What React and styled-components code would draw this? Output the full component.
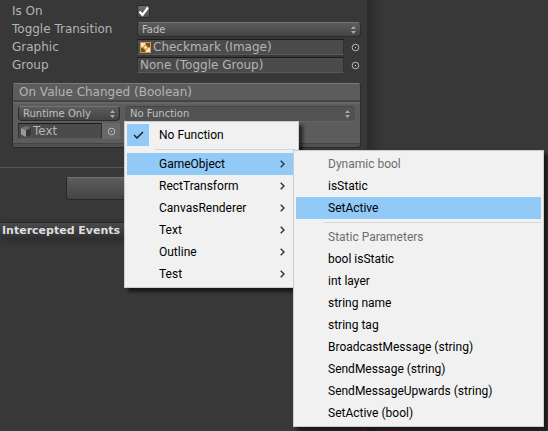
import React from "react";
import styled, { createGlobalStyle, css } from "styled-components";

const GlobalStyle = createGlobalStyle`
  * { box-sizing: border-box; }
  body {
    margin: 0;
    background: #383838;
    color: #b4b4b4;
    font: 12px/16px "DejaVu Sans", Verdana, sans-serif;
  }
  button, select, input { font: inherit; color: inherit; }
`;

const Editor = styled.main`
  display: grid;
  grid-template-columns: 67fr 33fr;
  min-height: 100vh;
  overflow: hidden;
`;

const Inspector = styled.section`
  display: flex;
  flex-direction: column;
  min-width: 0;
`;

const SidePanel = styled.aside`
  background: linear-gradient(to right, #2b2b2b, #323232 8px, #383838 20px);
`;

const Properties = styled.form`
  display: grid;
  gap: 2px;
  padding: 3px 6px 0 12px;
`;

const Row = styled.div`
  display: grid;
  grid-template-columns: 125px 1fr;
  align-items: center;
  height: 16px;
  white-space: nowrap;
`;

const Tick = styled.span`
  display: grid;
  width: 13px;
  height: 13px;

  > * { grid-area: 1 / 1; }
`;

const TickInput = styled.input`
  appearance: none;
  width: 13px;
  height: 13px;
  margin: 0;
  border: 1px solid #2a2a2a;
  border-radius: 2px;
  background: linear-gradient(#6e6e6e, #4c4c4c);
`;

const TickMark = styled.svg`
  pointer-events: none;
`;

const PopupWrap = styled.div`
  position: relative;
  display: grid;
  min-width: 0;
`;

const Popup = styled.select`
  appearance: none;
  width: 100%;
  height: 15px;
  margin: 0;
  padding: 0 14px 0 4px;
  border: 1px solid #2b2b2b;
  border-top-color: #727272;
  border-radius: 4px;
  background: linear-gradient(#5c5c5c, #444);
  color: #c0c0c0;
  font-size: 10px;
  line-height: 13px;

  ${(p) => p.$open && css`
    border-color: #505050;
    border-top-color: #464646;
    background: #525252;
    box-shadow: 0 1px #666;
  `}
`;

const PopupArrows = styled.svg`
  position: absolute;
  right: 5px;
  top: 4px;
  pointer-events: none;
`;

const ObjectRow = styled.div`
  display: grid;
  grid-template-columns: 1fr 17px;
  align-items: center;
  min-width: 0;
`;

const ObjectValue = styled.div`
  display: flex;
  align-items: center;
  gap: 2px;
  min-width: 0;
  height: 16px;
  padding: 0 2px;
  border: 1px solid #303030;
  border-top-color: #1c1c1c;
  border-bottom-color: #5a5a5a;
  background: #4b4b4b;
  line-height: 14px;
  white-space: nowrap;
`;

const Picker = styled.button`
  display: grid;
  place-items: center end;
  height: 16px;
  padding: 0 1px 0 0;
  border: 0;
  background: none;

  ${(p) => p.$filled && css`
    background: #686868;
    place-items: center;
    padding: 0;
  `}
`;

const EventBox = styled.section`
  margin: 10px 6px 0 12px;
`;

const EventTitle = styled.h2`
  margin: 0;
  height: 19px;
  padding: 0 6px;
  border: 1px solid #292929;
  border-top-color: #7a7a7a;
  border-bottom: 2px solid #454545;
  border-radius: 3px 3px 0 0;
  background: #5c5c5c;
  font-size: 12px;
  font-weight: 400;
  line-height: 16px;
`;

const EventBody = styled.div`
  display: grid;
  grid-template-columns: 102px 1fr;
  gap: 2px 5px;
  padding: 4px 5px;
  border: 1px solid #292929;
  border-width: 0 1px;
  background: #5c5c5c;
  box-shadow: inset 0 2px #646464;
`;

const EventObject = styled.div`
  display: grid;
  grid-template-columns: 84px 1fr;
`;

const EventFooter = styled.div`
  height: 5px;
  border: 1px solid #292929;
  border-top-color: #444;
  border-radius: 0 0 3px 3px;
  background: #505050;
`;

const Actions = styled.div`
  display: flex;
  justify-content: center;
  margin-top: 19px;
  padding: 9px 66px 0;
  border-top: 1px solid #565656;
`;

const ActionButton = styled.button`
  flex: 1;
  height: 23px;
  border: 1px solid #292929;
  border-top-color: #727272;
  border-radius: 3px;
  background: linear-gradient(#5c5c5c, #444);
`;

const PreviewTitle = styled.h2`
  margin: 22px 0 0;
  height: 16px;
  padding: 0 2px;
  border-top: 1px solid #292929;
  background: linear-gradient(#4a4a4a, #303030);
  box-shadow: 0 4px 6px #2e2e2e;
  color: #dedede;
  font-size: 11px;
  font-weight: 700;
  line-height: 16px;
`;

const Menu = styled.ul`
  position: absolute;
  z-index: 2;
  top: 100%;
  left: -1px;
  width: 175px;
  margin: 0;
  padding: 2px;
  border: 1px solid #ccc;
  background: #f1f1f1;
  box-shadow: 4px 4px 3px rgba(0, 0, 0, 0.55);
  color: #000;
  font: 12px/22px Roboto, "Noto Sans CJK KR", sans-serif;
  list-style: none;
  white-space: nowrap;
`;

const SubMenu = styled(Menu)`
  top: -3px;
  left: 166px;
  width: 251px;
`;

const MenuItem = styled.li`
  position: relative;
  background: ${(p) => (p.$active ? "#91c9f7" : "transparent")};
`;

const MenuButton = styled.button`
  display: grid;
  grid-template-columns: 22px 1fr 16px;
  column-gap: 10px;
  align-items: center;
  width: 100%;
  height: 22px;
  padding: 0;
  border: 0;
  background: none;
  text-align: left;

  &:disabled { color: #6d6d6d; }
`;

const CheckCell = styled.span`
  display: grid;
  place-items: center;
  height: 22px;
  background: ${(p) => (p.$checked ? "#91c9f7" : "transparent")};
`;

const Separator = styled.li`
  height: 7px;
  padding: 3px 0 3px 28px;

  &::before {
    content: "";
    display: block;
    height: 1px;
    background: #d5d5d5;
  }
`;

const Arrows = () => (
  <PopupArrows width="5" height="8" viewBox="0 0 5 8" fill="#a8a8a8" aria-hidden="true">
    <path d="M2.5 0 5 3H0zM0 5h5L2.5 8z" />
  </PopupArrows>
);

const Target = () => (
  <svg width="9" height="9" viewBox="0 0 9 9" aria-hidden="true">
    <circle cx="4.5" cy="4.5" r="3.3" fill="none" stroke="#b8b8b8" />
    <rect x="4" y="4" width="1" height="1" fill="#d8d8d8" />
  </svg>
);

const ImageIcon = () => (
  <svg width="11" height="11" viewBox="0 0 11 11" aria-hidden="true">
    <path fill="#dc9a30" d="M0 0h11v11H0z" />
    <path fill="#efe6d6" d="M1 1h4v4H1zM6 6h4v4H6z" />
    <path fill="#6a522a" d="M6 1h4v4H6zM1 6h4v4H1z" />
    <circle cx="5.5" cy="5.5" r="2" fill="#f2e3c4" stroke="#d48a1c" />
  </svg>
);

const CubeIcon = () => (
  <svg width="10" height="11" viewBox="0 0 10 11" aria-hidden="true">
    <path fill="#6e6e6e" d="m5 0 5 2-5 2.5L0 2z" />
    <path fill="#999" d="m0 2 5 2.5V11L0 8.500z" />
    <path fill="#353535" d="m10 2-5 2.500V11l5-2.500z" />
  </svg>
);

const CheckIcon = () => (
  <svg width="11" height="8" viewBox="0 0 11 8" fill="none" stroke="#222" strokeWidth="1.500" aria-hidden="true">
    <path d="m1 4 3 3 6-6" />
  </svg>
);

const Chevron = () => (
  <svg width="5" height="8" viewBox="0 0 5 8" fill="none" stroke="#333" strokeWidth="1.400" aria-hidden="true">
    <path d="m.7.7 3.300 3.300L.7 7.300" />
  </svg>
);

function PopupField({ id, value, label, open, children }) {
  return (
    <PopupWrap>
      <Popup id={id} aria-label={label} $open={open} defaultValue={value}>
        <option>{value}</option>
      </Popup>
      <Arrows />
      {children}
    </PopupWrap>
  );
}

function ObjectField({ name, value, icon }) {
  return (
    <Row>
      <span>{name}</span>
      <ObjectRow>
        <ObjectValue>{icon}{value}</ObjectValue>
        <Picker type="button" aria-label={`Select ${name}`}><Target /></Picker>
      </ObjectRow>
    </Row>
  );
}

function Entry({ label, checked, active, disabled, arrow, children }) {
  return (
    <MenuItem $active={active}>
      <MenuButton type="button" disabled={disabled}>
        <CheckCell $checked={checked}>{checked && <CheckIcon />}</CheckCell>
        <span>{label}</span>
        {arrow && <Chevron />}
      </MenuButton>
      {children}
    </MenuItem>
  );
}

const components = ["RectTransform", "CanvasRenderer", "Text", "Outline", "Test"];
const staticMembers = [
  "bool isStatic",
  "int layer",
  "string name",
  "string tag",
  "BroadcastMessage (string)",
  "SendMessage (string)",
  "SendMessageUpwards (string)",
  "SetActive (bool)",
];

export default function App() {
  return (
    <>
      <GlobalStyle />
      <Editor>
        <Inspector>
          <Properties>
            <Row>
              <label htmlFor="is-on">Is On</label>
              <Tick>
                <TickInput id="is-on" type="checkbox" defaultChecked />
                <TickMark width="13" height="13" viewBox="0 0 13 13" fill="none" stroke="#fff" strokeWidth="2.200" aria-hidden="true">
                  <path d="m2.500 6.500 3 3.500 5.500-7.500" />
                </TickMark>
              </Tick>
            </Row>
            <Row>
              <label htmlFor="transition">Toggle Transition</label>
              <PopupField id="transition" value="Fade" />
            </Row>
            <ObjectField name="Graphic" value="Checkmark (Image)" icon={<ImageIcon />} />
            <ObjectField name="Group" value="None (Toggle Group)" />
          </Properties>
          <EventBox>
            <EventTitle>On Value Changed (Boolean)</EventTitle>
            <EventBody>
              <PopupField label="Call state" value="Runtime Only" />
              <PopupField label="Function" value="No Function" open>
                <Menu>
                  <Entry label="No Function" checked />
                  <Separator role="separator" />
                  <Entry label="GameObject" active arrow>
                    <SubMenu>
                      <Entry label="Dynamic bool" disabled />
                      <Entry label="isStatic" />
                      <Entry label="SetActive" active />
                      <Separator role="separator" />
                      <Entry label="Static Parameters" disabled />
                      {staticMembers.map((m) => <Entry key={m} label={m} />)}
                    </SubMenu>
                  </Entry>
                  {components.map((c) => <Entry key={c} label={c} arrow />)}
                </Menu>
              </PopupField>
              <EventObject>
                <ObjectValue><CubeIcon />Text</ObjectValue>
                <Picker type="button" $filled aria-label="Select target"><Target /></Picker>
              </EventObject>
            </EventBody>
            <EventFooter />
          </EventBox>
          <Actions>
            <ActionButton type="button" aria-label="Run" />
          </Actions>
          <PreviewTitle>Intercepted Events</PreviewTitle>
        </Inspector>
        <SidePanel />
      </Editor>
    </>
  );
}
